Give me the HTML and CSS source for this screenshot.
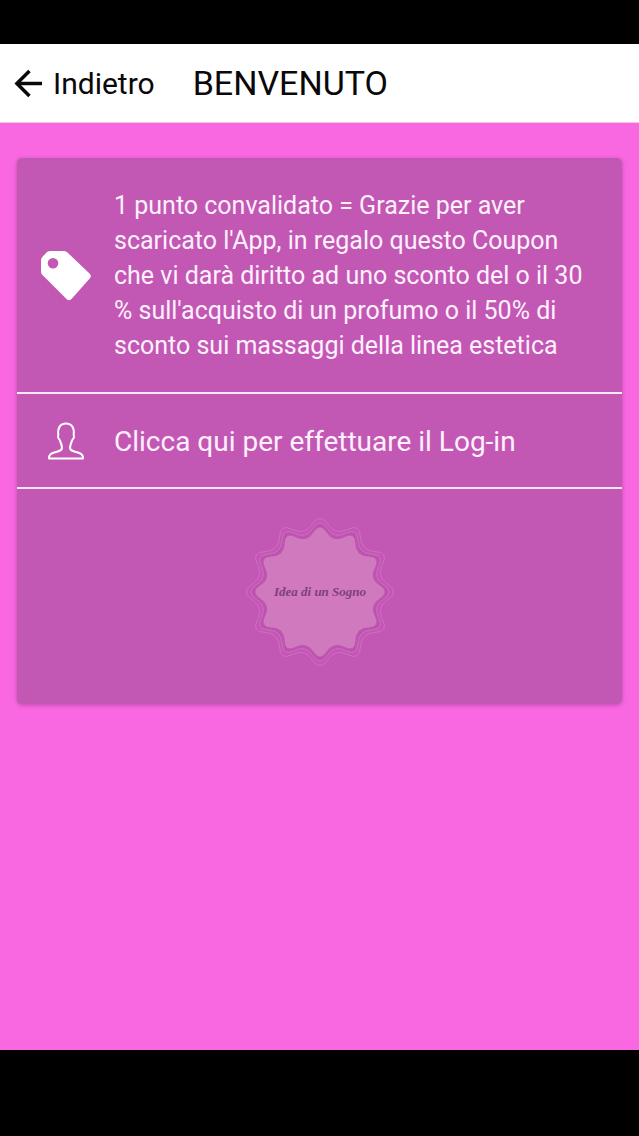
FILE: index.html
```html
<!DOCTYPE html>
<html lang="it">
<head>
  <meta charset="UTF-8">
  <meta name="viewport" content="width=device-width, initial-scale=1">
  <title>Benvenuto</title>
  <link rel="stylesheet" href="styles.css">
</head>
<body>
  <header class="navbar">
    <button class="back-btn" type="button">
      <svg viewBox="0 0 30 30" fill="none" stroke="#0a080a" stroke-width="3.6">
        <path d="M29 15H3"/>
        <path d="M16 2L3 15l13 13"/>
      </svg>
      Indietro
    </button>
    <h1 class="title">BENVENUTO</h1>
  </header>

  <main class="content">
    <section class="card">
      <div class="row coupon">
        <!-- Etichetta -->
        <svg class="icon" viewBox="0 0 52 52">
          <path fill="#fff" fill-rule="evenodd" d="M10.500 1H23c2 0 3.500.5 5 2l21.500 20.500c1.800 1.800 1.800 3.500 0 5.300L31.500 49c-1.800 1.800-3.200 1.800-5 0L3 25.500C1.500 24 1 23 1 21V11c0-2 .5-3 1.500-4.200l3.300-3.500C7 1.800 8.500 1 10.500 1zM13 8a5.300 5.300 0 1 0 0 10.600A5.300 5.300 0 0 0 13 8z"/>
        </svg>
        <p>1 punto convalidato = Grazie per aver scaricato l'App, in regalo questo Coupon che vi darà diritto ad uno sconto del o il 30 % sull'acquisto di un profumo o il 50% di sconto sui massaggi della linea estetica</p>
      </div>

      <a class="row login" href="#">
        <!-- Utente -->
        <svg class="icon" viewBox="0 0 52 52" fill="none" stroke="#fff" stroke-width="2" stroke-linejoin="round">
          <path d="M9 43.500c0-4 2-5 6-6.200 4.500-1.300 7-2 7-4.300 0-3-1.500-6-2.500-8.500-1.300-.8-1.800-3-1.200-4.500C17.500 13 20 8.500 26 8.500S34.500 13 33.700 20c.6 1.500.1 3.700-1.200 4.500C31.500 27 30 30 30 33c0 2.300 2.500 3 7 4.300 4 1.200 6 2.200 6 6.200z"/>
        </svg>
        <span>Clicca qui per effettuare il Log-in</span>
      </a>

      <div class="logo">
        <svg viewBox="-76 -76 152 152">
          <defs>
            <path id="seal" d="M70 7.800Q58 15.500 64.500 28.300Q71 41 56.700 41.700Q42.400 42.400 41.700 56.700Q41 71 28.300 64.500Q15.500 58 7.800 70Q0 82-7.800 70Q-15.500 58-28.300 64.500Q-41 71-41.700 56.700Q-42.400 42.400-56.700 41.700Q-71 41-64.500 28.300Q-58 15.500-70 7.800Q-82 0-70-7.800Q-58-15.500-64.500-28.300Q-71-41-56.700-41.700Q-42.400-42.400-41.700-56.700Q-41-71-28.300-64.500Q-15.500-58-7.800-70Q0-82 7.800-70Q15.500-58 28.300-64.500Q41-71 41.700-56.700Q42.400-42.400 56.700-41.700Q71-41 64.500-28.300Q58-15.500 70-7.800Q82 0 70 7.800z"/>
          </defs>
          <use href="#seal" fill="none" stroke="#cf70c1" transform="scale(.97)"/>
          <use href="#seal" fill="#be53b0" stroke="#cf70c1" transform="scale(.91)"/>
          <use href="#seal" fill="#d179bf" transform="scale(.85)"/>
          <text class="logo-text" y="4" text-anchor="middle">Idea di un Sogno</text>
        </svg>
      </div>
    </section>
  </main>
</body>
</html>
```

FILE: styles.css
```css
* {
  box-sizing: border-box;
}
body {
  margin: 0;
  padding: 44px 0 86px;
  min-height: 100vh;
  display: flex;
  flex-direction: column;
  background: #000;
  font-family: Roboto, Arial, sans-serif;
}
.navbar {
  display: flex;
  align-items: center;
  gap: 38px;
  height: 79px;
  padding: 0 14px;
  background: #fff;
  border-bottom: 1px solid #ebc9e8;
}
.back-btn {
  display: flex;
  align-items: center;
  gap: 10px;
  padding: 0;
  border: none;
  background: none;
  color: #0a080a;
  font-family: inherit;
  font-size: 30px;
  cursor: pointer;
}
.back-btn svg {
  width: 29px;
  height: 29px;
}
.title {
  margin: 0;
  color: #0a080a;
  font-size: 34px;
  font-weight: 400;
}
.content {
  flex: 1;
  padding: 35px 17px;
  background: #f967e1;
}
.card {
  background: #c258b4;
  border-radius: 5px;
  box-shadow: 0 1px 4px #8a3f8799;
}
.row {
  display: flex;
  align-items: center;
  gap: 22px;
  padding: 20px 32px 20px 23px;
  border-bottom: 2px solid #fce6fa;
  color: #fff0fd;
  text-decoration: none;
}
.icon {
  flex: none;
  width: 52px;
  height: 52px;
}
.coupon {
  padding-top: 30px;
  padding-bottom: 29px;
}
.coupon p {
  margin: 0;
  font-size: 25px;
  line-height: 35px;
}
.login {
  padding-top: 21px;
  font-size: 28px;
}
.logo {
  display: flex;
  justify-content: center;
  padding: 27px 0 36px;
}
.logo svg {
  width: 152px;
  height: 152px;
}
.logo-text {
  fill: #7d3f7d;
  font-family: "Liberation Serif", serif;
  font-size: 13px;
  font-style: italic;
  font-weight: bold;
}
```
